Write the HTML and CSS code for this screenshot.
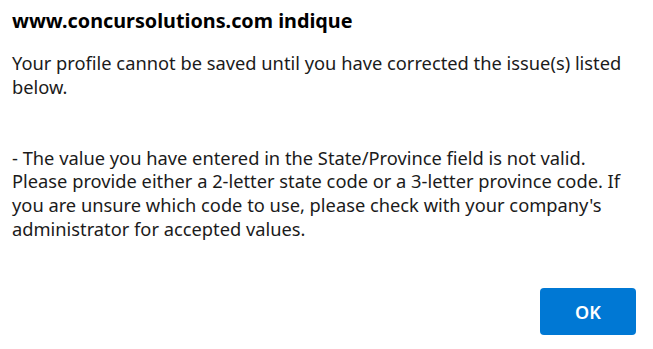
FILE: index.html
```html
<!DOCTYPE html>
<html lang="fr">
<head>
<meta charset="utf-8">
<title>Alert</title>
<link rel="stylesheet" href="styles.css">
</head>
<body>
<div class="dialog">
  <h1 class="title">www.concursolutions.com indique</h1>
  <div class="message">
    <p class="para">Your profile cannot be saved until you have corrected the issue(s) listed<br>below.</p>
    <p class="para">- The value you have entered in the State/Province field is not valid.<br>Please provide either a 2-letter state code or a 3-letter province code. If<br>you are unsure which code to use, please check with your company's<br>administrator for accepted values.</p>
  </div>
  <div class="actions">
    <button class="ok">OK</button>
  </div>
</div>
</body>
</html>
```

FILE: styles.css
```css
html, body {
  margin: 0;
  padding: 0;
  background: #ffffff;
}
body {
  font-family: "Noto Sans", "Open Sans", sans-serif;
  color: #1b1b1b;
}
.dialog {
  width: 653px;
  height: 349px;
  box-sizing: border-box;
  padding: 9px 17px 14px 12px;
  display: flex;
  flex-direction: column;
}
.title {
  margin: 0;
  font-size: 19.8px;
  font-weight: 700;
  line-height: 24px;
  color: #000;
}
.message {
  margin-top: 18px;
  font-size: 18.3px;
  line-height: 23.8px;
  white-space: nowrap;
}
.para {
  margin: 0 0 47px 0;
}
.actions {
  margin-top: auto;
  display: flex;
  justify-content: flex-end;
}
.ok {
  width: 96px;
  height: 47px;
  border: none;
  border-radius: 4px;
  background: #0078d4;
  color: #fff;
  font-family: "Noto Sans", sans-serif;
  font-size: 18px;
  font-weight: 600;
}
```
